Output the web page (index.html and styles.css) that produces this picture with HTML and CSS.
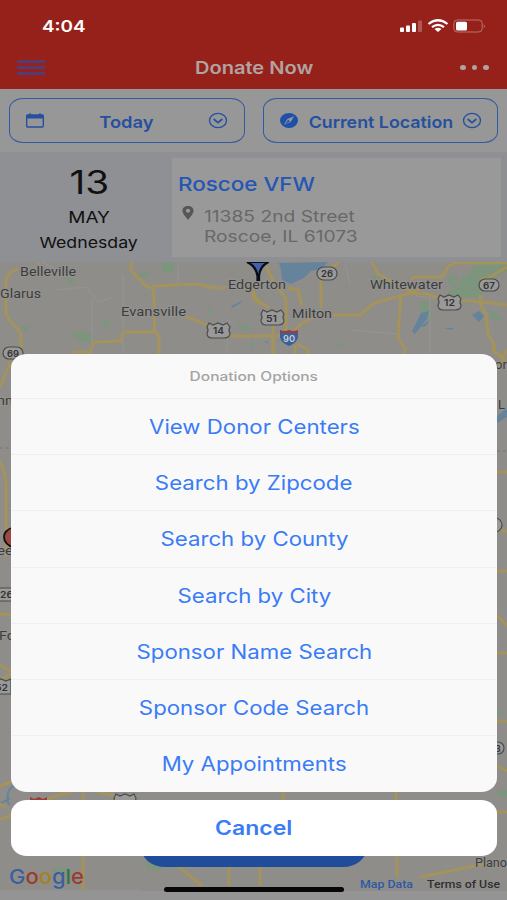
FILE: index.html
```html
<!DOCTYPE html>
<html lang="en">
<head>
    <meta charset="utf-8">
    <title>Donate Now</title>
    <link rel="stylesheet" href="styles.css">
</head>
<body>
    <div class="screen">
        <header class="header">
            <div class="status-bar">
                <span class="time">4:04</span>
                <svg class="status-icons" width="88" height="16" viewBox="0 0 88 16">
                    <g fill="#fff">
                        <rect x="1" y="9.500" width="4" height="4.500" rx="1"/>
                        <rect x="7" y="7.500" width="4" height="6.500" rx="1"/>
                        <rect x="13" y="5" width="4" height="9" rx="1"/>
                        <rect x="19" y="2.500" width="4" height="11.500" rx="1" opacity=".25"/>
                    </g>
                    <g fill="none" stroke="#fff" stroke-width="2.200">
                        <path d="M29.500 6Q39 -1.500 48.500 6"/>
                        <path d="M33 9.200Q39 4.500 45 9.200"/>
                    </g>
                    <path d="M35.500 11Q39 8.500 42.500 11L39 14Z" fill="#fff"/>
                    <rect x="54.800" y="2" width="28.400" height="12" rx="3.500" fill="none" stroke="#bd736e" stroke-width="1"/>
                    <rect x="57" y="3.800" width="11" height="8.600" rx="1.500" fill="#fff"/>
                    <path d="M84.800 6v4.500q2-2.200 0-4.500" fill="#bd736e"/>
                </svg>
            </div>
            <div class="nav-bar">
                <div class="menu"><i></i><i></i><i></i></div>
                <h1 class="title">Donate Now</h1>
                <div class="more"><i></i><i></i><i></i></div>
            </div>
        </header>

        <div class="filters">
            <div class="filter">
                <svg width="20" height="18" viewBox="0 0 20 18">
                    <rect x="1.700" y="3" width="16.600" height="12" rx="1" fill="none" stroke="#24509f" stroke-width="1.400"/>
                    <path d="M1 3h18v3.500H1zM4 1.500h2v2H4zM14 1.500h2v2h-2z" fill="#24509f"/>
                </svg>
                <span class="filter-text today">Today</span>
                <svg width="20" height="18" viewBox="0 0 20 18" fill="none" stroke="#24509f" stroke-width="1.300">
                    <ellipse cx="10" cy="8.500" rx="8.500" ry="7.100"/>
                    <path d="M5.600 7L10 10.600L14.400 7" stroke-width="1.700"/>
                </svg>
            </div>
            <div class="filter">
                <svg width="20" height="18" viewBox="0 0 20 18">
                    <ellipse cx="10" cy="8.500" rx="9" ry="7.500" fill="#1f4fa8"/>
                    <path d="M15 4.200L8.300 7L5 12.800L11.700 10Z" fill="#999"/>
                    <path d="M9.200 7.700L11 9.400L6.200 12Z" fill="#1f4fa8"/>
                </svg>
                <span class="filter-text location">Current Location</span>
                <svg width="20" height="18" viewBox="0 0 20 18" fill="none" stroke="#24509f" stroke-width="1.300">
                    <ellipse cx="10" cy="8.500" rx="8.500" ry="7.100"/>
                    <path d="M5.600 7L10 10.600L14.400 7" stroke-width="1.700"/>
                </svg>
            </div>
        </div>

        <div class="event">
            <div class="date">
                <span class="day">13</span>
                <span class="month">MAY</span>
                <span class="weekday">Wednesday</span>
            </div>
            <div class="place">
                <h2 class="place-name">Roscoe VFW</h2>
                <div class="address">
                    <svg width="12" height="15" viewBox="0 0 12 15">
                        <path fill-rule="evenodd" d="M6 0C2.700 0 .5 2 .5 4.800C.5 8 4 11 6 14C8 11 11.500 8 11.500 4.800C11.500 2 9.300 0 6 0ZM6 2.800a2.200 2 0 1 1 0 4a2.200 2 0 1 1 0-4Z" fill="#565656"/>
                    </svg>
                    <div class="address-lines">
                        <span class="line-one">11385 2nd Street</span>
                        <span class="line-two">Roscoe, IL 61073</span>
                    </div>
                </div>
            </div>
        </div>

        <svg class="map" width="507" height="629" viewBox="0 262 507 629">
            <rect y="262" width="507" height="629" fill="#8f8d8a"/>

            <!-- parks -->
            <g fill="#7d947d">
                <path d="M162 262h12v10h-12zM138 274l10-2 1 4-9 2zM70 331l10 1 3-1 9 3v7l-9 2-7-5zM103 319l6 1 1 5-6 2zM66 277l9 2-1 5-6-1zM21 325l8 1-2 5-6-2zM144 294l5 2-1 3zM236 322l11 3 7 5-10 1zM208 308l3-1v7h-3zM251 341l3 1v6l-3-1z"/>
                <path d="M446 275h12l-3 7 1 7-6-3zM475 264l32-2v10l-10 3-5 8-8 4-3 11-15-1-12 6-13-2 8-10 9-4 3-10 8-3zM419 303l9-3 2 11-9 2zM425 310l8 4-3 7-5-3zM487 308l15 9-2 5-8-3zM336 344l10 1-2 2h-7zM376 344l6-1-1 2zM371 274l13 6-1 4-10-5zM253 294l10 5-4 3z"/>
                <path d="M498 790h9v7h-9zM498 711h6v4h-6zM146 858h16v12h-16zM52 870l10-3 6 1-3 6-10-1z"/>
            </g>

            <!-- water -->
            <g fill="#65849c">
                <path d="M279 263l49-1-7 7-10 2-7 7-13 6-9-4-1-10z"/>
                <path d="M421 313l8-2-2 8-12 15-3-3zM472 315l7-4 5 5-5 6zM430 320l-4 6-6 1zM444 328l10 0-3 2zM497 416l10-8v9l-10 6z"/>
                <path d="M231 306l13-6-5 4-7 4zM264 342l3-1 2 3z"/>
            </g>
            <path d="M0 804l10-6M15 785q-8 5-7 10q-2 7 2 10" fill="none" stroke="#65849c" stroke-width="2"/>

            <!-- small roads -->
            <path d="M42 262l12 6M56 290l30-3 13 15 15-5M92 300v54M123 275v79M178 265v20M230 320l-4 34M200 285l30 2M345 262l5 22M350 330l48 4M405 280l12 16 13 2M430 298v60M0 890h140" fill="none" stroke="#969593"/>
            <path d="M0 448h11M497 451h10" stroke="#777" stroke-dasharray="3 3"/>

            <!-- highways -->
            <g class="highways">
                <path d="M40 262l-3 1M18 269q-12 4-12 12v33q3 5 4 7l7 7q4 4 4 11v20"/>
                <path d="M131 262v8l13 14 9 5 2 22-1 20 5 5v18M153 286l44-2 16 4 13 0M73 352h17l4-10 27-1 2-9 33 0M185 317l11 3 12 6M230 336h43v18M253 294l6 7 10 7"/>
                <path d="M253 283v15l8 6M266 266l7 15 13 18v32M273 325v29M288 288l10 2 4 16M339 262l-18 14v32M276 336l14-1 12-12 15-7M332 315h28l14-12 22-6 15-4 13-8M372 262l6 12 20 11 15 8M401 294l-3 44 7 10v10M411 280l3-3h28l6-10 5-4h54M411 293l16 1 10 4 25 2 18 2 12 1 15 2M480 295l1 10 5 9 2 20 6 10 1 10"/>
                <path d="M295 345v9M297 344l10 5 2 5M480 280l8-2 19-11"/>
                <path d="M0 387l6-14 5-12M0 462q6 10 6 25v70M0 614l11 1M0 665l11 6M0 680l11-6M491 348l16 14M497 370l10-20M497 472h10M497 528l10 4M497 571h10M497 615l10 11M497 653h10M497 721h10M497 766l10 5M489 812h18M0 786l11-4M0 820q35-16 55-24l20-5M83 789v14M95 791l25 6M283 789v14M396 789v14M0 804l6 3"/>
                <path d="M83 854v36M178 866l24 20M229 866v20M260 866v20M397 854v23M420 877l69-14"/>
            </g>

            <!-- map pins -->
            <path d="M247 262q9 4 10.500 14v4h1.500v-4q1-10 9.500-14z" fill="#4560ab" stroke="#090d18" stroke-width="2.200"/>
            <path d="M14 527q-10 3-10 10q0 7 10 11" fill="#9d4844" stroke="#111" stroke-width="1.800"/>

            <!-- road signs -->
            <g class="signs">
                <rect x="3" y="347" width="20" height="12" rx="6"/>
                <rect x="317" y="267" width="20" height="13" rx="6.500"/>
                <rect x="479" y="279" width="20" height="12" rx="6"/>
                <rect x="-8" y="588" width="27" height="13" rx="6.500"/>
                <circle cx="498" cy="748" r="6"/>
                <circle cx="495" cy="525" r="7"/>
                <path d="M209 323l4 2 5-2 5 2 4-2 3 4q-2 3 0 6q0 5-6 5h-12q-5 0-5-5q2-3 0-6z"/>
                <path d="M263 310l4 2 5-2 5 2 4-2 3 4q-2 3 0 6q0 5-6 5h-12q-5 0-5-5q2-3 0-6z"/>
                <path d="M440 295l4 2 5-2 5 2 4-2 3 4q-2 3 0 6q0 5-6 5h-12q-5 0-5-5q2-3 0-6z"/>
                <path d="M116 794l4 2 5-2 5 2 4-2 2 4-2 10h-18l-2-10z"/>
                <path d="M-9 679l5 2 5-2 5 2 5-2v15H-8z"/>
            </g>
            <path d="M280 331q9 3 18 0v6q-1 6-9 9q-8-3-9-9z" fill="#37609c"/>
            <path d="M280 330q5 2 9 0q4 2 9 0v3h-18zM30 797l4 2 5-2 4 2 4-2v5H30z" fill="#9e3c39"/>

            <g class="sign-text">
                <text x="7" y="356.500" textLength="12" lengthAdjust="spacingAndGlyphs">69</text>
                <text x="321" y="277" textLength="12" lengthAdjust="spacingAndGlyphs">26</text>
                <text x="483" y="288.500" textLength="12" lengthAdjust="spacingAndGlyphs">67</text>
                <text x="213" y="334" textLength="11" lengthAdjust="spacingAndGlyphs">14</text>
                <text x="266" y="321.500" textLength="11" lengthAdjust="spacingAndGlyphs">51</text>
                <text x="444" y="306" textLength="11" lengthAdjust="spacingAndGlyphs">12</text>
                <text x="0" y="598" textLength="13" lengthAdjust="spacingAndGlyphs">26</text>
                <text x="-5" y="691" textLength="13" lengthAdjust="spacingAndGlyphs">52</text>
                <text x="495" y="751.500">3</text>
                <text x="283" y="342" textLength="12" lengthAdjust="spacingAndGlyphs" class="interstate">90</text>
            </g>

            <g class="towns">
                <text x="20" y="276" textLength="56" lengthAdjust="spacingAndGlyphs">Belleville</text>
                <text x="0" y="298" textLength="41" lengthAdjust="spacingAndGlyphs">Glarus</text>
                <text x="121" y="315.500" textLength="65" lengthAdjust="spacingAndGlyphs">Evansville</text>
                <text x="228" y="288.500" textLength="58" lengthAdjust="spacingAndGlyphs">Edgerton</text>
                <text x="292" y="318" textLength="40" lengthAdjust="spacingAndGlyphs">Milton</text>
                <text x="370" y="289" textLength="73" lengthAdjust="spacingAndGlyphs">Whitewater</text>
                <text x="-3" y="405" textLength="16" lengthAdjust="spacingAndGlyphs">nn</text>
                <text x="-3" y="555" textLength="16" lengthAdjust="spacingAndGlyphs">ee</text>
                <text x="-1" y="640" textLength="16" lengthAdjust="spacingAndGlyphs">Fo</text>
                <text x="495" y="369">or</text>
                <text x="498" y="409">L</text>
                <text x="475" y="867" textLength="32" lengthAdjust="spacingAndGlyphs">Plano</text>
            </g>

            <g class="google">
                <text x="9" y="884" textLength="75" lengthAdjust="spacingAndGlyphs"><tspan fill="#385f9e">G</tspan><tspan fill="#9d3931">o</tspan><tspan fill="#a0841e">o</tspan><tspan fill="#385f9e">g</tspan><tspan fill="#2e7943">l</tspan><tspan fill="#9d3931">e</tspan></text>
            </g>
            <text x="360" y="888" textLength="53" lengthAdjust="spacingAndGlyphs" class="map-data">Map Data</text>
            <text x="427" y="888" textLength="73" lengthAdjust="spacingAndGlyphs" class="terms">Terms of Use</text>
        </svg>

        <div class="list-button"></div>

        <div class="action-sheet">
            <div class="options">
                <div class="options-title"><span>Donation Options</span></div>
                <div class="option"><span>View Donor Centers</span></div>
                <div class="option"><span>Search by Zipcode</span></div>
                <div class="option"><span>Search by County</span></div>
                <div class="option"><span>Search by City</span></div>
                <div class="option"><span>Sponsor Name Search</span></div>
                <div class="option"><span>Sponsor Code Search</span></div>
                <div class="option"><span>My Appointments</span></div>
            </div>
            <div class="cancel"><span>Cancel</span></div>
        </div>

        <div class="home-indicator"></div>
    </div>
</body>
</html>
```
FILE: styles.css
```css
* {
    box-sizing: border-box;
}

body {
    margin: 0;
    font-family: Inter, "Liberation Sans", sans-serif;
    background-color: #949494;
}

h1,
h2 {
    margin: 0;
}

span {
    display: inline-block;
    white-space: nowrap;
}

.screen {
    position: relative;
    width: 507px;
    height: 900px;
    overflow: hidden;
}

/* header */
.header {
    height: 89px;
    background-color: #96211a;
}

.status-bar {
    display: flex;
    justify-content: space-between;
    align-items: center;
    height: 52px;
    padding: 0 20px 0 42px;
}

.time {
    color: #fff;
    font-size: 16px;
    font-weight: 600;
    transform: scaleX(1.18);
    transform-origin: left;
}

.nav-bar {
    display: flex;
    justify-content: space-between;
    align-items: center;
    height: 31px;
    padding: 0 18px 0 17px;
}

.menu {
    display: flex;
    flex-direction: column;
    gap: 3px;
    width: 28px;
}

.menu i {
    height: 3px;
    background-color: #533b73;
}

.title {
    margin-left: 3px;
    color: #b0a3a0;
    font-size: 17px;
    font-weight: 600;
    transform: scaleX(1.18);
}

.more {
    display: flex;
    gap: 6px;
}

.more i {
    width: 5.5px;
    height: 5px;
    border-radius: 50%;
    background-color: #b0a3a0;
}

/* filters */
.filters {
    display: flex;
    gap: 18px;
    height: 63px;
    padding: 9px;
    background-color: #979797;
}

.filter {
    display: flex;
    flex: 1;
    justify-content: space-between;
    align-items: center;
    padding: 0 15px;
    border: 1.5px solid #315ba3;
    border-radius: 14px / 11px;
}

.filter-text {
    position: relative;
    top: 1px;
    color: #24509f;
    font-size: 16.5px;
    font-weight: 600;
}

.today {
    transform: scaleX(1.11);
}

.location {
    left: 1px;
    transform: scaleX(1.08);
}

/* event */
.event {
    display: flex;
    height: 110px;
    padding: 6px 6px 5px 6px;
    background-color: #8e9093;
}

.date {
    display: flex;
    flex-direction: column;
    align-items: center;
    width: 166px;
    color: #111;
}

.day {
    margin-top: 5px;
    font-size: 32px;
    line-height: 40px;
    transform: scaleX(1.21);
}

.month {
    font-size: 16.5px;
    line-height: 28px;
    transform: scaleX(1.15);
}

.weekday {
    font-size: 15px;
    line-height: 24px;
    transform: scaleX(1.18);
}

.place {
    flex: 1;
    padding: 14px 6px;
    background-color: #999;
}

.place-name {
    color: #2457b4;
    font-size: 19px;
    font-weight: 500;
    line-height: 26px;
    transform: scaleX(1.18);
    transform-origin: left;
}

.address {
    display: flex;
    gap: 10px;
    margin-top: 8px;
    padding-left: 4px;
}

.address-lines {
    display: flex;
    flex-direction: column;
    color: #686868;
    font-size: 16px;
    line-height: 20px;
}

.address-lines span {
    transform: scaleX(1.2);
    transform-origin: left;
}

/* map */
.map {
    display: block;
}

.highways {
    fill: none;
    stroke: #a4935a;
    stroke-width: 3;
    stroke-linejoin: round;
}

.signs {
    fill: #999;
    stroke: #4c4c4c;
    stroke-width: 1.2;
}

.sign-text {
    fill: #333;
    font-size: 9px;
    font-weight: 600;
}

.interstate {
    fill: #ccc;
}

.towns {
    fill: #3c3c3c;
    font-family: Roboto, sans-serif;
    font-size: 13px;
    stroke: #959492;
    stroke-width: 1.5px;
    paint-order: stroke;
}

.google {
    font-size: 20.5px;
    font-weight: 500;
}

.map-data,
.terms {
    font-family: Roboto, sans-serif;
    font-size: 10.5px;
    font-weight: 500;
}

.map-data {
    fill: #2d59a5;
}

.terms {
    fill: #303030;
}

.list-button {
    position: absolute;
    left: 141px;
    top: 827px;
    width: 226px;
    height: 40px;
    border-radius: 24px / 20px;
    background-color: #204d99;
}

/* action sheet */
.action-sheet {
    position: absolute;
    left: 11px;
    top: 354px;
    display: flex;
    flex-direction: column;
    gap: 8px;
    width: 486px;
    color: #3a7bf6;
    text-align: center;
}

.options {
    height: 438px;
    border-radius: 16px / 14px;
    background-color: #f9f9f9;
}

.options-title {
    height: 44px;
    color: #a3a3a3;
    font-size: 12.5px;
    font-weight: 500;
    line-height: 46px;
}

.options-title span {
    transform: scaleX(1.24);
}

.option {
    height: 56.2px;
    border-top: 1px solid #efefef;
    font-size: 19.5px;
    line-height: 57px;
}

.option span,
.cancel span {
    transform: scaleX(1.14);
}

.cancel {
    height: 56px;
    border-radius: 16px / 14px;
    background-color: #fff;
    font-size: 19.5px;
    font-weight: 600;
    line-height: 57px;
}

.cancel span {
    transform: scaleX(1.18);
}

.home-indicator {
    position: absolute;
    left: 164px;
    top: 887px;
    width: 180px;
    height: 5px;
    border-radius: 3px;
    background-color: #080808;
}
```
